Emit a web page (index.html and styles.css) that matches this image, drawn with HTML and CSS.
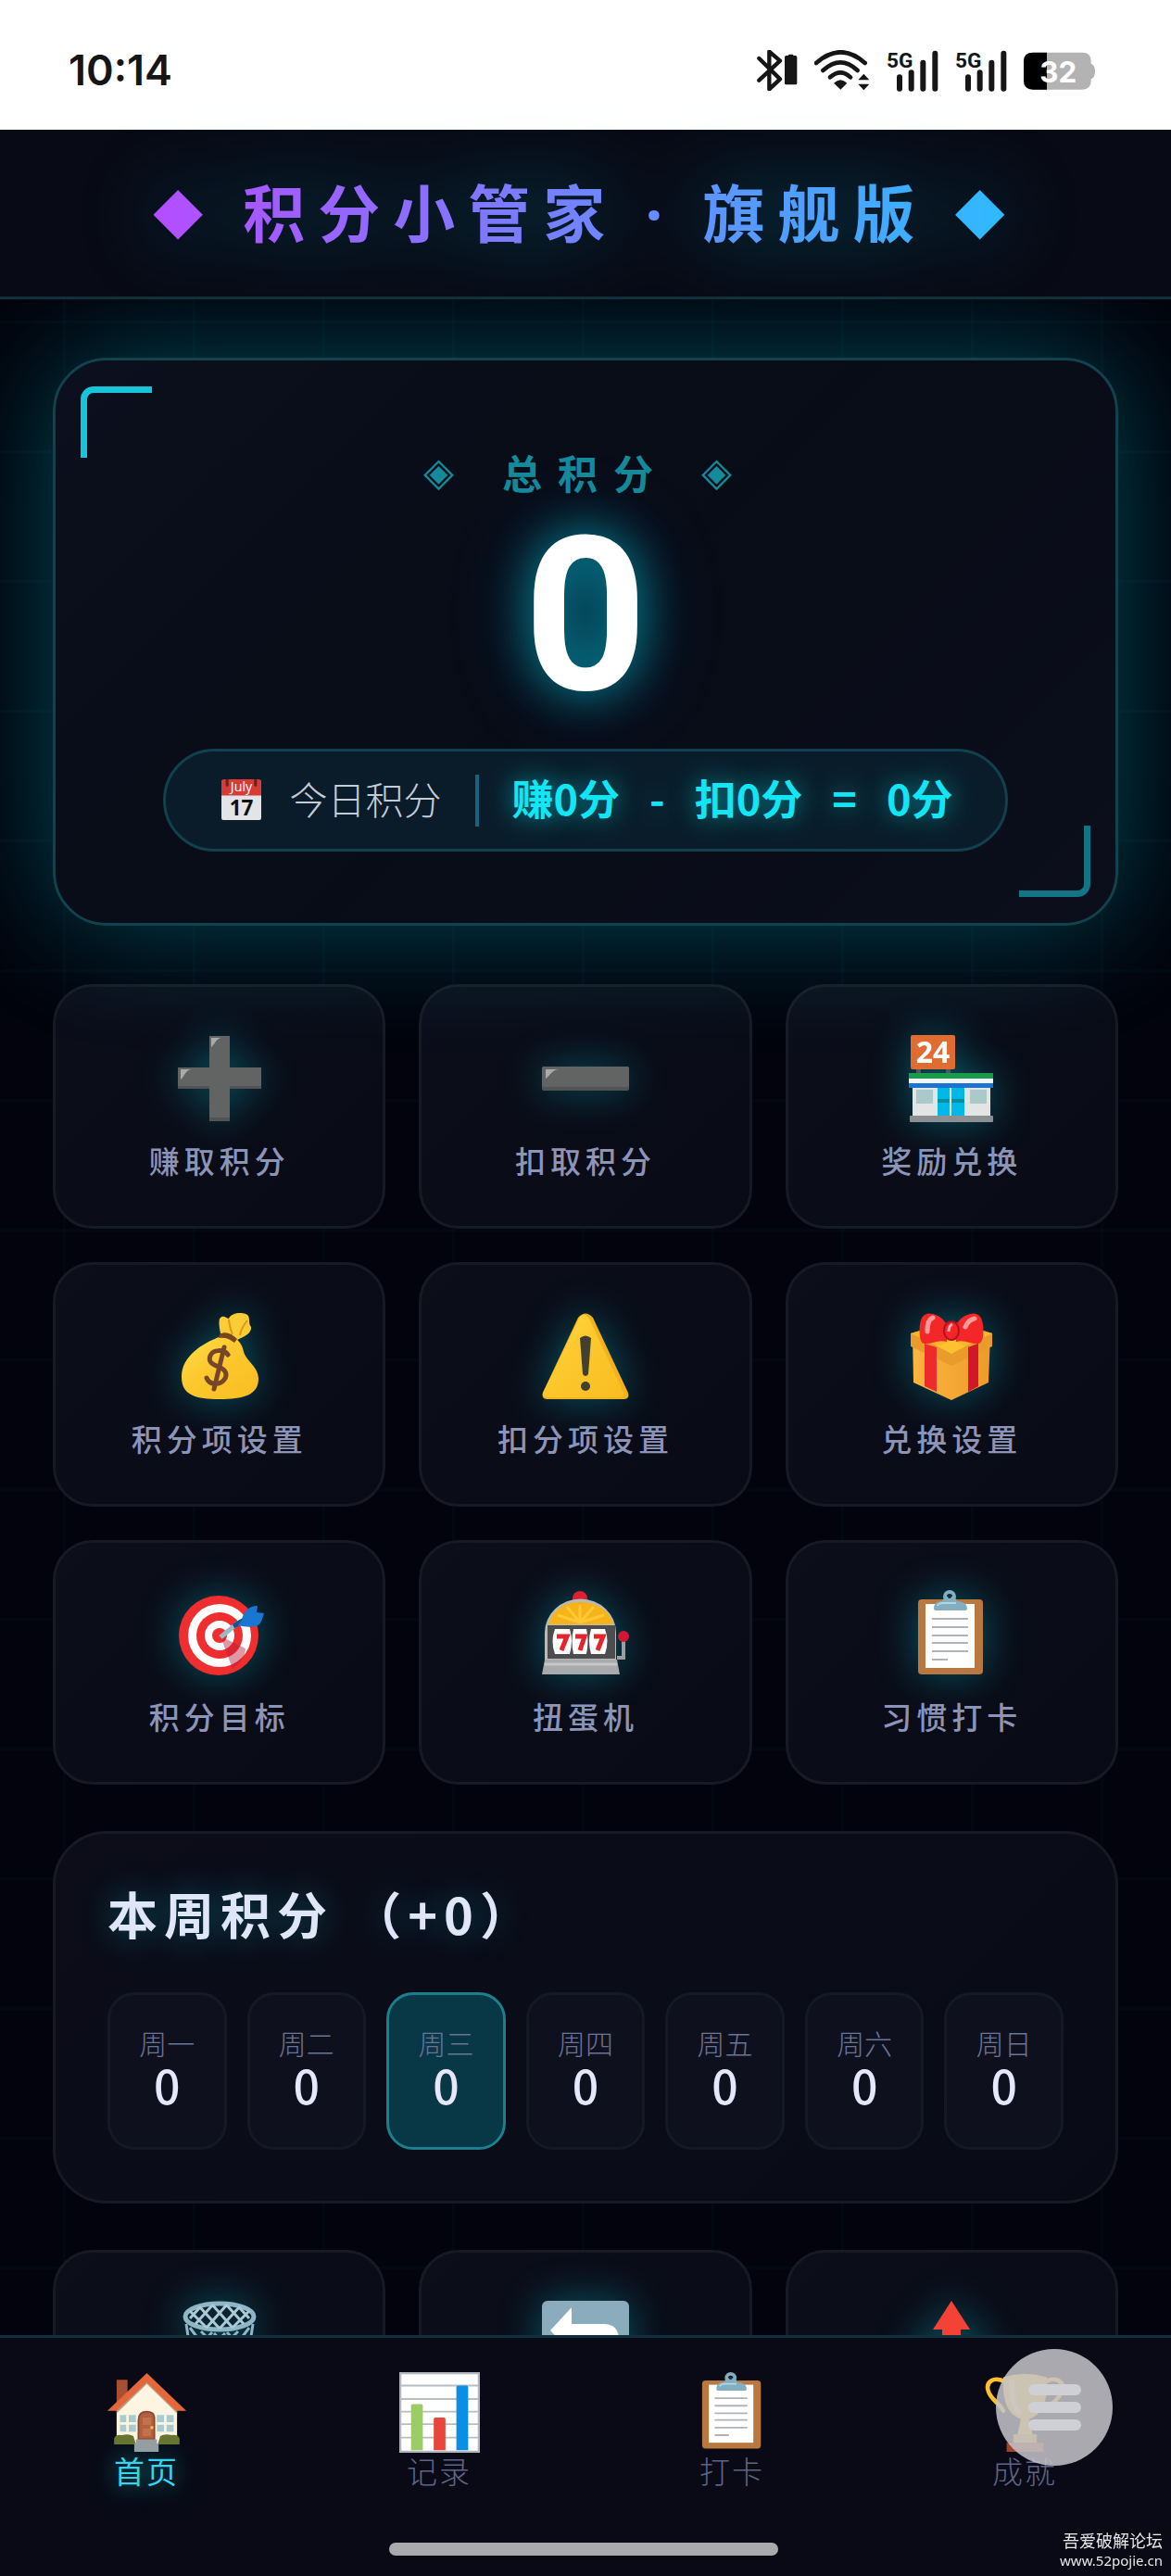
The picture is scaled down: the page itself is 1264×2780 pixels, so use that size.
FILE: index.html
```
<!DOCTYPE html>
<html lang="zh-CN">
	<head>
		<meta charset="UTF-8">
		<meta name="viewport" content="width=device-width, initial-scale=1">
		<title>积分小管家 · 旗舰版</title>
		<link rel="stylesheet" href="styles.css">
	</head>
	<body>
		<svg class="defs" aria-hidden="true">
			<defs>
				<linearGradient id="gold" x1="0" y1="0" x2="1" y2="1">
					<stop offset="0" stop-color="#ffe04a"/>
					<stop offset="0.4" stop-color="#fdc92f"/>
					<stop offset="1" stop-color="#f9bd20"/>
				</linearGradient>
				<linearGradient id="box" x1="0" y1="0" x2="1" y2="0">
					<stop offset="0" stop-color="#fbb640"/>
					<stop offset="1" stop-color="#ee9a2a"/>
				</linearGradient>
				<symbol id="i-clipboard" viewBox="0 0 96 96">
					<rect x="12" y="10" width="70" height="81" rx="4" fill="#b9783f"/>
					<rect x="20" y="15" width="53" height="69" fill="#fff"/>
					<path d="M27 31h39M27 40h39M27 49h39M27 57h39M27 66h39M27 75h17" stroke="#b0b4b8" stroke-width="2"/>
					<circle cx="46" cy="7" r="5" fill="none" stroke="#82aec0" stroke-width="4"/>
					<path d="M29 20c0-6 4-8 9-8l3-5h10l3 5c5 0 11 2 11 8 0 1-1 2-2 2H31c-1 0-2-1-2-2z" fill="#82aec0"/>
					<circle cx="46" cy="7" r="2" fill="#17313c"/>
					<path d="M33 17c1-3 4-3 6-3h14" stroke="#b0d6e4" stroke-width="2" fill="none"/>
				</symbol>
			</defs>
		</svg>

		<div class="status">
			<span class="time">10:14</span>
			<div class="status-icons">
				<svg width="44" height="44" viewBox="0 0 132 132">
					<path d="M7 27l68 67-35 33V5l35 30L7 98" fill="none" stroke="#161616" stroke-width="13" stroke-linejoin="round" stroke-linecap="round"/>
					<path d="M90 23q0-5 5-5h6l3-4h12l3 4h6q5 0 5 5v84q0 5-5 5H95q-5 0-5-5z" fill="#161616"/>
				</svg>
				<svg width="60" height="44" viewBox="0 0 180 132">
					<g fill="none" stroke="#161616" stroke-width="14" stroke-linecap="round">
						<path d="M6 42q80-70 158 0"/>
						<path d="M28 66q57-52 112 0"/>
						<path d="M51 88q34-30 66 0"/>
					</g>
					<path d="M63 107q22-21 43 0l-21 21z" fill="#161616"/>
					<path d="M142 97l18-20 18 20zM142 110h36l-18 20z" fill="#161616"/>
				</svg>
				<svg class="signal" width="56" height="44" viewBox="0 0 168 132">
					<text class="net" x="0" y="56">5G</text>
					<path d="M42 88v37M80 73v52M118 41v84M157 11v114" stroke="#161616" stroke-width="18" stroke-linecap="round"/>
				</svg>
				<svg class="signal" width="56" height="44" viewBox="0 0 168 132">
					<text class="net" x="0" y="56">5G</text>
					<path d="M42 88v37M80 73v52M118 41v84M157 11v114" stroke="#161616" stroke-width="18" stroke-linecap="round"/>
				</svg>
				<svg width="77" height="44" viewBox="0 0 231 132">
					<path d="M30 8h160q28 0 28 28v8q13 4 13 25t-13 25v6q0 28-28 28H30Q0 128 0 100V36Q0 8 30 8z" fill="#b3b3b3"/>
					<path d="M75 8H30Q0 8 0 36v64q0 28 30 28h45z" fill="#000"/>
					<text class="charge" x="112" y="104">32</text>
				</svg>
			</div>
		</div>

		<header class="header">
			<h1><span class="diamond">◆</span> 积分小管家 <span class="dot">·</span> 旗舰版 <span class="diamond">◆</span></h1>
		</header>

		<main class="main">
			<section class="total">
				<h2 class="total-label"><span class="gem">◈</span><span>总积分</span><span class="gem">◈</span></h2>
				<div class="total-value">0</div>
				<div class="today">
					<svg class="calendar" viewBox="0 0 42 44">
						<rect x="0" y="1" width="42" height="42" rx="2" fill="#e2e4e6"/>
						<path d="M0 3q0-3 3-3h36q3 0 3 3v14H0z" fill="#d63c35"/>
						<path d="M6 0v6M36 0v6" stroke="#6d1f1c" stroke-width="3" stroke-linecap="round"/>
						<text class="month" x="21" y="13">July</text>
						<text class="date" x="21" y="38">17</text>
					</svg>
					<span class="today-label">今日积分</span>
					<span class="today-sum"><span>赚0分</span><span>-</span><span>扣0分</span><span>=</span><span>0分</span></span>
				</div>
			</section>

			<div class="grid">
				<button class="tile">
					<svg viewBox="0 0 96 96">
						<path d="M37 2h22v34h34v23H59v35H37V59H3V36h34z" fill="#525353"/>
						<path d="M37 2h22v34h34v20H59v34H37V56H3V36h34z" fill="#626464"/>
						<path d="M39 14V4h11c-6 1-7 7-11 10zM6 49V38h11c-6 1-7 8-11 11z" fill="#a9abab"/>
					</svg>
					<span>赚取积分</span>
				</button>
				<button class="tile">
					<svg viewBox="0 0 96 96">
						<rect x="1" y="35" width="94" height="26" rx="2" fill="#525353"/>
						<rect x="1" y="35" width="94" height="22" rx="2" fill="#626464"/>
						<path d="M5 48V38h14c-8 1-9 7-14 10z" fill="#a9abab"/>
					</svg>
					<span>扣取积分</span>
				</button>
				<button class="tile">
					<svg viewBox="0 0 96 96">
						<path d="M10 38h5v4h-5zM42 38h5v4h-5z" fill="#555"/>
						<rect x="4" y="1" width="48" height="37" rx="2" fill="#e06c31"/>
						<text class="shop" x="28" y="31">24</text>
						<path d="M6 54h84v38H6z" fill="#e3e5e4"/>
						<path d="M10 60h18v15H10zM68 60h18v15H68z" fill="#a9c9cb"/>
						<path d="M33 56h29v33H33z" fill="#00b8e8"/>
						<path d="M33 72h29" stroke="#0a8fa0" stroke-width="4"/>
						<path d="M47 56v33" stroke="#e3f4f8" stroke-width="2"/>
						<path d="M2 42h91v6H2z" fill="#1b9a4c"/>
						<path d="M2 48h91v5H2z" fill="#f2f6f6"/>
						<path d="M2 53h91v5H2z" fill="#1b74cf"/>
						<rect x="3" y="88" width="90" height="7" rx="1" fill="#8d9093"/>
					</svg>
					<span>奖励兑换</span>
				</button>
				<button class="tile">
					<svg viewBox="0 0 96 96">
						<path d="M47 27C30 34 7 47 7 70c0 20 16 24 41 24s42-4 42-22c0-13-13-19-16-29-1-7-5-12-9-15z" fill="url(#gold)"/>
						<path d="M49 23c-2-9-2-16 0-17 3-3 6 0 9 1 3-8 19-7 21-3 2 5 0 8 3 12 1 7-8 11-15 14z" fill="#fccb35"/>
						<path d="M58 8c1 6 1 10 4 16M78 9c-4 5-7 9-8 16" stroke="#d99a12" stroke-width="2" fill="none"/>
						<path d="M48 24c6-4 13-1 19 5l-3 4c-6-5-11-6-17-5z" fill="#75461f"/>
						<path d="M57 46c-4-6-16-6-19 1-3 8 4 10 9 12 8 3 10 9 6 14-5 6-16 6-19-2M53 38L42 83" fill="none" stroke="#75462a" stroke-width="5" stroke-linecap="round"/>
					</svg>
					<span>积分项设置</span>
				</button>
				<button class="tile">
					<svg viewBox="0 0 96 96">
						<path d="M40 6q8-9 16 0l38 81q2 7-5 7H7q-7 0-5-7z" fill="#f4b11f"/>
						<path d="M42 5q5-5 10 2l37 80q1 5-4 5H6q-5 0-4-5z" fill="url(#gold)"/>
						<path d="M42 28q6-5 12 0l-3 39q-3 4-6 0z" fill="#42402f"/>
						<circle cx="48" cy="80" r="5" fill="#42402f"/>
					</svg>
					<span>扣分项设置</span>
				</button>
				<button class="tile">
					<svg viewBox="0 0 96 96">
						<path d="M6 23l42-12 42 12-2 53-40 19L7 76z" fill="url(#box)"/>
						<path d="M4 23v14l44 21 44-21V23L48 10z" fill="#e99c2b"/>
						<path d="M4 23l44 21 44-21-44-13z" fill="#fcb62e"/>
						<path d="M33 37l15-7 15 7-15 8z" fill="#ffc22f"/>
						<path d="M19 34l13 4v48l-13-6zM66 38l11-4v46l-11 6z" fill="#ee2b2b"/>
						<path d="M66 38l11-4v46l-11 6z" fill="#d3172b"/>
						<path d="M14 27C12 8 17-1 28 2c8 2 13 7 15 13v17c-9-3-17 3-24 2-3 0-4-3-5-7zM82 27C84 8 79-1 68 2c-8 2-13 7-15 13v17c9-3 17 3 24 2 3 0 4-3 5-7z" fill="#f32728"/>
						<path d="M22 21c0-8 1-13 6-15M63 16c2-5 5-8 10-9" stroke="#ff9a9a" stroke-width="5" stroke-linecap="round" fill="none"/>
						<ellipse cx="48" cy="20" rx="8" ry="10" fill="#f32728" stroke="#b50f1e" stroke-width="2"/>
						<path d="M45 21q0-6 4-8" stroke="#ffb0b0" stroke-width="3" fill="none"/>
					</svg>
					<span>兑换设置</span>
				</button>
				<button class="tile">
					<svg viewBox="0 0 96 96">
						<circle cx="47" cy="49" r="43" fill="#f02d2f"/>
						<circle cx="48" cy="49" r="34" fill="#fff"/>
						<circle cx="48" cy="49" r="25" fill="#f02d2f"/>
						<circle cx="48" cy="49" r="16" fill="#fff"/>
						<circle cx="48" cy="49" r="8" fill="#f02d2f"/>
						<path d="M49 50l27 13c0 9-7 17-14 22z" fill="#b71c3a" opacity=".45"/>
						<path d="M49 51l18-15" stroke="#9db7c4" stroke-width="5"/>
						<path d="M63 39l15-9" stroke="#16508f" stroke-width="5"/>
						<path d="M72 32c2-9 8-15 17-15l-1 7 8 1c-2 6-3 13-9 14-5 1-12 1-19-1z" fill="#1976d2"/>
					</svg>
					<span>积分目标</span>
				</button>
				<button class="tile">
					<svg viewBox="0 0 96 96">
						<circle cx="42" cy="9" r="8" fill="#dd1f33"/>
						<path d="M4 78V46a38 36 0 0 1 77 0v32z" fill="#b9babb"/>
						<path d="M8 37c5-17 18-24 34-24s31 7 36 24z" fill="#f7b318"/>
						<path d="M42 35L18 27M42 35L28 18M42 35V16M42 35l15-17M42 35l26-8" stroke="#ffc936" stroke-width="3"/>
						<path d="M7 38h73v36H7z" fill="#4d4d4f"/>
						<path d="M15 42h16q4 13 0 27H15q-5-14 0-27zM35 42h14q3 13 0 27H35q-3-14 0-27zM54 42h15q5 13 0 27H54q-4-14 0-27z" fill="#fff"/>
						<path d="M17 50h11l-6 15M37 50h10l-5 15M57 50h10l-6 15" fill="none" stroke="#e5242c" stroke-width="5"/>
						<path d="M82 73h7V54" fill="none" stroke="#9c9d9e" stroke-width="4"/>
						<circle cx="89" cy="50" r="6" fill="#d01836"/>
						<path d="M4 75h78l3 16H1z" fill="#a9aaab"/>
						<path d="M4 80h78" stroke="#c6c7c8" stroke-width="3"/>
					</svg>
					<span>扭蛋机</span>
				</button>
				<button class="tile">
					<svg viewBox="0 0 96 96"><use href="#i-clipboard"/></svg>
					<span>习惯打卡</span>
				</button>
			</div>

			<section class="week">
				<h2>本周积分 （+0）</h2>
				<div class="days">
					<div class="day"><span>周一</span><b>0</b></div>
					<div class="day"><span>周二</span><b>0</b></div>
					<div class="day active"><span>周三</span><b>0</b></div>
					<div class="day"><span>周四</span><b>0</b></div>
					<div class="day"><span>周五</span><b>0</b></div>
					<div class="day"><span>周六</span><b>0</b></div>
					<div class="day"><span>周日</span><b>0</b></div>
				</div>
			</section>

			<div class="grid">
				<button class="tile" aria-label="清空">
					<svg viewBox="0 0 96 96">
						<path d="M12 26l10 66h52l10-66M16 30l18 24M28 34l24 24M42 36l24 26M56 35l20 22M80 30L62 54M68 34L44 58M54 36L30 60M40 35L20 57" fill="none" stroke="#8fb6c6" stroke-width="3"/>
						<ellipse cx="48" cy="18" rx="37" ry="14" fill="#0d2430" stroke="#8fb6c6" stroke-width="5"/>
						<path d="M16 20l10-11M22 26L40 6M34 30L56 5M48 31L70 7M62 30L80 12M80 20L70 9M74 26L56 6M62 30L40 5M48 31L26 7M34 30L16 12" stroke="#a9cbd8" stroke-width="3"/>
					</svg>
				</button>
				<button class="tile" aria-label="撤销">
					<svg viewBox="0 0 96 96">
						<rect x="1" y="1" width="94" height="94" rx="6" fill="#8aacbc"/>
						<path d="M10 33L33 8v18h36q15 1 15 17v10q0 17-17 17H40V58h26q7 0 7-8 0-10-8-10H33v17z" fill="#fff"/>
					</svg>
				</button>
				<button class="tile" aria-label="导出">
					<svg viewBox="0 0 96 96">
						<path d="M14 40h68v52H14z" fill="#d9a95a" stroke="#fbe0aa" stroke-width="4"/>
						<path d="M48 1l20 31H58v30H38V32H28z" fill="#f44336"/>
					</svg>
				</button>
			</div>
		</main>

		<nav class="nav">
			<a href="#home" class="active">
				<svg viewBox="0 0 96 96">
					<path d="M12 9h13v22L12 43z" fill="#a84e33"/>
					<path d="M12 44L48 8l36 36v42H12z" fill="#fdf5e1"/>
					<path d="M12 49l36-35 36 35V41L48 8 12 41z" fill="#b9a089"/>
					<path d="M48 1l47 45H83L48 12 12 46H1z" fill="#e4673b"/>
					<path d="M16 51h19v20H16zM60 51h20v20H60z" fill="#a9cbd0"/>
					<path d="M25 51v20M16 61h19M70 51v20M60 61h20" stroke="#fdf5e1" stroke-width="3"/>
					<path d="M9 86V79q2-5 9-4 9-2 14 1l3 10zM87 86V79q-2-5-9-4-9-2-14 1l-3 10z" fill="#67752f"/>
					<path d="M38 80V57q0-10 10-10t9 10v23z" fill="#b3603f" stroke="#8b4930" stroke-width="2"/>
					<path d="M43 54h10v9H43zM43 67h10v9H43z" fill="#c4714d"/>
					<circle cx="54" cy="66" r="2" fill="#f4c33a"/>
					<path d="M35 80h25v5h2v10H33V85h2z" fill="#9a9ca0"/>
				</svg>
				<span>首页</span>
			</a>
			<a href="#records">
				<svg viewBox="0 0 96 96">
					<rect x="1" y="1" width="94" height="94" fill="#fff" stroke="#b3b5bd" stroke-width="3"/>
					<path d="M2 16h92M2 32h92M2 47h92M2 62h92M2 78h92" stroke="#b9bcc0" stroke-width="2"/>
					<path d="M14 40q0-2 2-2h10q2 0 2 2v53H14z" fill="#9ccc65"/>
					<path d="M41 56q0-2 2-2h10q2 0 2 2v37H41z" fill="#e8453c"/>
					<path d="M68 18q0-2 2-2h10q2 0 2 2v75H68z" fill="#0a8ee6"/>
				</svg>
				<span>记录</span>
			</a>
			<a href="#checkin">
				<svg viewBox="0 0 96 96"><use href="#i-clipboard"/></svg>
				<span>打卡</span>
			</a>
			<a href="#badges">
				<svg viewBox="0 0 96 96">
					<path d="M25 12C10 4 1 12 4 22c3 11 12 13 18 24M71 12c15-8 24 0 21 10-3 11-12 13-18 24" fill="none" stroke="#fdbf2d" stroke-width="5" stroke-linecap="round"/>
					<path d="M22 6q26-8 52 0c1 25-3 43-21 50l4 18H39l4-18C25 49 21 31 22 6z" fill="#fcc22e"/>
					<path d="M32 8c0 20 2 34 10 42" stroke="#ffe38a" stroke-width="6" fill="none"/>
					<path d="M34 74h28v10H34z" fill="#d9a02a"/>
					<path d="M26 84h44v11H26z" fill="#a3402f"/>
				</svg>
				<span>成就</span>
			</a>
		</nav>

		<button class="float-menu" aria-label="菜单"><i></i><i></i><i></i></button>
		<div class="home-bar"></div>
		<div class="watermark">
			<div>吾爱破解论坛</div>
			<div class="site">www.52pojie.cn</div>
		</div>
	</body>
</html>
```
FILE: styles.css
```
*, *::before, *::after {
	box-sizing: border-box;
}
body {
	margin: 0;
	min-height: 100vh;
	font-family: "Noto Sans CJK SC", "Noto Sans", sans-serif;
	color: #e4e8fa;
	background-color: #02030c;
	background-image:
		linear-gradient(rgba(0, 240, 255, 0.02) 3px, transparent 3px),
		linear-gradient(90deg, rgba(0, 240, 255, 0.02) 3px, transparent 3px);
	background-size: 140px 140px;
	background-position: 68px 66px;
}
h1, h2 {
	margin: 0;
}
button {
	font-family: inherit;
	cursor: pointer;
}
.defs {
	position: absolute;
	width: 0;
	height: 0;
}

/* phone status bar */
.status {
	display: flex;
	justify-content: space-between;
	align-items: center;
	height: 140px;
	padding: 12px 82px 0 74px;
	background: #fff;
	color: #161616;
}
.time {
	font: 600 45px/60px Inter, sans-serif;
}
.status-icons {
	display: flex;
	gap: 18px;
}
.signal {
	overflow: visible;
}
.net {
	font: 700 68px Roboto, sans-serif;
	fill: #161616;
}
.charge {
	font: 700 94px Inter, sans-serif;
	fill: #fff;
	text-anchor: middle;
}

.header {
	position: relative;
	display: flex;
	justify-content: center;
	align-items: center;
	height: 183px;
	padding-bottom: 4px;
	background: #080a15;
	border-bottom: 3px solid #11303a;
	z-index: 1;
}
.header h1 {
	font-size: 67px;
	line-height: 90px;
	font-weight: 700;
	letter-spacing: 14px;
	white-space: nowrap;
	color: transparent;
	background: linear-gradient(90deg, #b44dff, #2dbbff);
	-webkit-background-clip: text;
	background-clip: text;
	filter: drop-shadow(0 0 44px rgba(0, 200, 240, 0.4));
}
.header .diamond {
	font-family: "DejaVu Sans", sans-serif;
	font-size: 70px;
	font-weight: 400;
	vertical-align: 6px;
}
.header .dot {
	font-family: "Noto Sans", sans-serif;
}

.main {
	padding: 63px 57px 0;
}

/* total score */
.total {
	position: relative;
	display: flex;
	flex-direction: column;
	align-items: center;
	padding: 90px 40px 77px;
	margin-bottom: 63px;
	border: 3px solid #11434f;
	border-radius: 58px;
	background: linear-gradient(135deg, #0c0f1d, #080c16 50%, #0c0e1c);
	box-shadow: 0 0 130px rgba(0, 240, 255, 0.3);
}
.total::before,
.total::after {
	content: "";
	position: absolute;
	width: 77px;
	height: 77px;
}
.total::before {
	top: 28px;
	left: 27px;
	border-top: 7px solid #18c4d8;
	border-left: 7px solid #18c4d8;
	border-top-left-radius: 14px;
}
.total::after {
	right: 27px;
	bottom: 28px;
	border-right: 7px solid #117585;
	border-bottom: 7px solid #117585;
	border-bottom-right-radius: 14px;
}
.total-label {
	display: flex;
	gap: 35px;
	font-size: 43px;
	line-height: 60px;
	font-weight: 700;
	letter-spacing: 17px;
	color: #148a9a;
}
.gem {
	font-family: "DejaVu Sans", sans-serif;
	font-weight: 400;
}
.total-value {
	margin-top: 25px;
	font-family: Roboto, sans-serif;
	font-size: 232px;
	line-height: 203px;
	font-weight: 700;
	color: #fff;
	text-shadow: 0 0 50px rgba(0, 240, 255, 0.6), 0 0 90px rgba(0, 160, 255, 0.3);
}
.today {
	display: flex;
	align-items: center;
	margin-top: 41px;
	height: 111px;
	padding: 0 57px 0 60px;
	border: 3px solid #10414d;
	border-radius: 56px;
	background: #0a1c29;
	white-space: nowrap;
}
.calendar {
	width: 43px;
	height: 45px;
}
.month {
	font: 400 14px "Open Sans", sans-serif;
	fill: #fff;
	text-anchor: middle;
}
.date {
	font: 700 22px "Open Sans", sans-serif;
	fill: #111;
	text-anchor: middle;
}
.today-label {
	margin-left: 31px;
	padding: 0 36px 6px 0;
	font-size: 41px;
	line-height: 50px;
	font-weight: 300;
	color: #c3cbd6;
	border-right: 4px solid #15667a;
}
.today-sum {
	display: flex;
	gap: 32px;
	margin-left: 36px;
	padding-bottom: 6px;
	font-size: 45px;
	line-height: 50px;
	font-weight: 700;
	color: #12e6f5;
	text-shadow: 0 0 28px rgba(0, 240, 255, 0.6);
}

/* tiles */
.grid {
	display: grid;
	grid-template-columns: repeat(3, 1fr);
	gap: 36px;
}
.tile {
	display: flex;
	flex-direction: column;
	align-items: center;
	height: 264px;
	padding: 51px 0 49px;
	border: 3px solid #171a25;
	border-radius: 43px;
	background: linear-gradient(135deg, #0c0e1a, #080b15);
	color: #8c94b8;
	font-size: 33px;
	line-height: 40px;
	font-weight: 500;
	letter-spacing: 5px;
}
.tile svg {
	flex: none;
	width: 96px;
	height: 96px;
	margin-bottom: 20px;
	filter: drop-shadow(0 0 22px rgba(0, 240, 255, 0.32));
}
.shop {
	font: 700 32px "Noto Sans", sans-serif;
	letter-spacing: 0;
	fill: #fff;
	text-anchor: middle;
}

/* week */
.week {
	margin: 50px 0;
	padding: 53px 56px 55px;
	border: 3px solid #171a25;
	border-radius: 58px;
	background: linear-gradient(135deg, #0c0d19, #080b16);
}
.week h2 {
	margin-bottom: 52px;
	font-size: 54px;
	line-height: 66px;
	font-weight: 700;
	letter-spacing: 7px;
	color: #dfe6f8;
	text-shadow: 0 0 36px rgba(0, 240, 255, 0.3);
}
.days {
	display: grid;
	grid-template-columns: repeat(7, 1fr);
	gap: 22px;
}
.day {
	display: flex;
	flex-direction: column;
	align-items: center;
	height: 170px;
	padding-top: 30px;
	border: 3px solid #151825;
	border-radius: 29px;
	background: #0e111d;
}
.day span {
	font-size: 30px;
	line-height: 42px;
	font-weight: 300;
	color: #6b7396;
}
.day b {
	font-size: 50px;
	line-height: 48px;
	font-weight: 500;
}
.day.active {
	border-color: #1d7f8c;
	background: #083746;
}

/* bottom bar */
.nav {
	position: fixed;
	left: 0;
	right: 0;
	bottom: 0;
	display: grid;
	grid-template-columns: repeat(4, 1fr);
	height: 260px;
	padding-top: 37px;
	border-top: 3px solid #11303a;
	background: #090a15;
}
.nav a {
	display: flex;
	flex-direction: column;
	align-items: center;
	color: #5f6486;
	font-size: 33px;
	line-height: 38px;
	font-weight: 300;
	letter-spacing: 2px;
	text-decoration: none;
}
.nav svg {
	width: 87px;
	height: 87px;
}
.nav a.active {
	color: #35d3ec;
	font-weight: 400;
	text-shadow: 0 0 28px rgba(0, 240, 255, 0.6);
}
.float-menu {
	position: fixed;
	right: 63px;
	bottom: 119px;
	display: flex;
	flex-direction: column;
	justify-content: center;
	align-items: center;
	gap: 7px;
	width: 126px;
	height: 126px;
	border: 0;
	border-radius: 50%;
	background: rgba(196, 196, 200, 0.86);
}
.float-menu i {
	width: 57px;
	height: 12px;
	border-radius: 6px;
	background: #cfcfd6;
}
.home-bar {
	position: fixed;
	left: 50%;
	bottom: 22px;
	width: 420px;
	height: 14px;
	margin-left: -212px;
	border-radius: 7px;
	background: #aaaaae;
}
.watermark {
	position: fixed;
	right: 9px;
	bottom: 6px;
	font-size: 18px;
	line-height: 22px;
	color: #e8e8e8;
	text-align: right;
}
.watermark .site {
	font-family: "Noto Sans", sans-serif;
	font-size: 15px;
}
```
